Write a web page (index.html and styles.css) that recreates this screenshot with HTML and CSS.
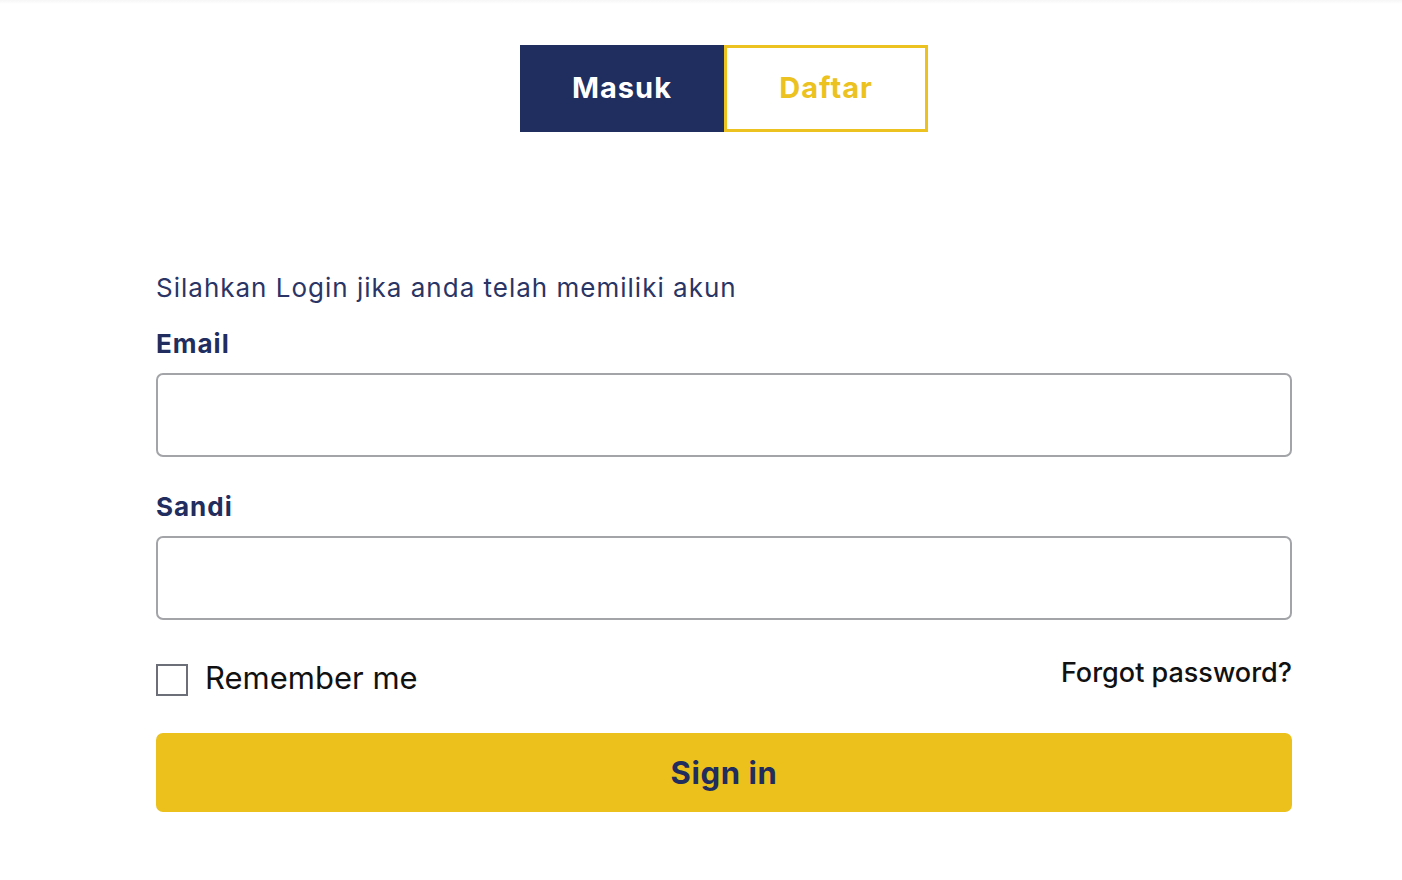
FILE: index.html
```html
<!DOCTYPE html>
<html lang="id">
<head>
<meta charset="utf-8">
<title>Masuk</title>
<link rel="stylesheet" href="styles.css">
</head>
<body>
<div class="topshade"></div>
<main class="page">
  <nav class="tabs">
    <a class="tab tab-active" href="#">Masuk</a>
    <a class="tab tab-outline" href="#">Daftar</a>
  </nav>
  <form class="form">
    <p class="intro">Silahkan Login jika anda telah memiliki akun</p>
    <label class="label" for="email">Email</label>
    <input class="input" id="email" type="email">
    <label class="label label-second" for="pass">Sandi</label>
    <input class="input" id="pass" type="password">
    <div class="row">
      <label class="remember"><span class="check"></span><span class="remember-text">Remember me</span></label>
      <a class="forgot" href="#">Forgot password?</a>
    </div>
    <button class="submit" type="button">Sign in</button>
  </form>
</main>
</body>
</html>
```
FILE: styles.css
```css
* { box-sizing: border-box; }
html, body { margin: 0; padding: 0; background: #fff; }
body { font-family: Inter, "Noto Sans", sans-serif; color: #202d5e; }
.topshade { height: 4px; background: linear-gradient(#f6f6f6, #fff); }
.page { width: 1136px; margin-left: 156px; display: flex; flex-direction: column; }
.tabs { display: flex; justify-content: center; margin-top: 41px; }
.tab { width: 204px; height: 87px; display: flex; align-items: center; justify-content: center; font-weight: 700; font-size: 29px; letter-spacing: 1px; text-decoration: none; padding-bottom: 2px; }
.tab-active { background: #202d5f; color: #fff; }
.tab-outline { border: 3px solid #ebc21f; color: #ebc21f; }
.form { display: flex; flex-direction: column; margin-top: 138px; }
.intro { margin: 0; font-size: 26px; line-height: 36px; letter-spacing: 1px; color: #2a3566; }
.label { font-weight: 700; font-size: 26px; line-height: 36px; letter-spacing: 1px; margin-top: 20px; margin-bottom: 11px; }
.label-second { margin-top: 32px; }
.input { height: 84px; width: 100%; border: 2px solid #a3a4a8; border-radius: 7px; background: #fff; font-size: 24px; }
.row { display: flex; justify-content: space-between; align-items: center; margin-top: 36px; font-family: Inter, "Liberation Sans", sans-serif; color: #111; }
.remember { display: flex; align-items: center; font-size: 31px; gap: 17px; }
.remember-text { padding-bottom: 5px; }
.check { width: 32px; height: 32px; border: 2px solid #6c6f77; display: block; }
.forgot { font-size: 27px; color: #111; text-decoration: none; font-weight: 500; margin-bottom: 14px; }
.submit { margin-top: 30px; height: 79px; width: 100%; border: 0; border-radius: 7px; background: #ecc11c; color: #202d5e; font-family: Inter, "Noto Sans", sans-serif; font-weight: 700; font-size: 31px; letter-spacing: 0.6px; }
```
